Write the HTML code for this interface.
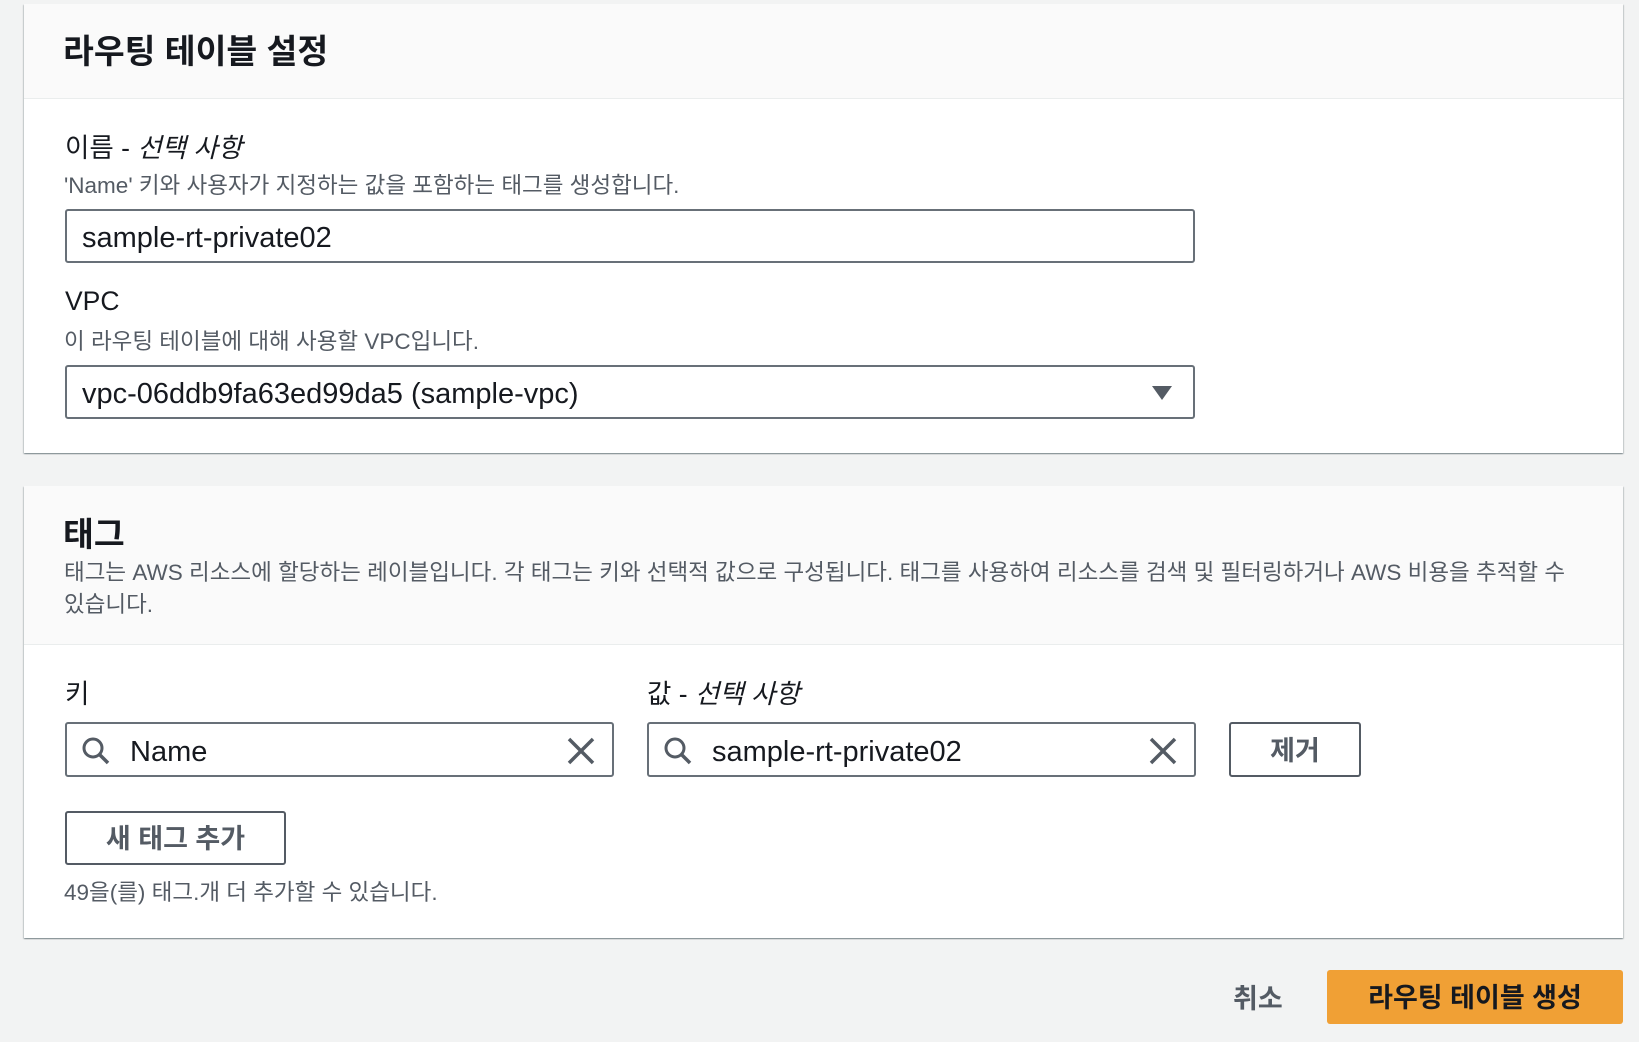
<!DOCTYPE html>
<html><head><meta charset="utf-8"><style>
*{box-sizing:border-box;margin:0;padding:0}
body{width:1639px;height:1042px;background:#f2f3f3;font-family:"Liberation Sans","Noto Sans CJK KR",sans-serif;color:#16191f;position:relative;overflow:hidden}
.a{position:absolute;white-space:nowrap}
.panel{position:absolute;left:24px;width:1599px;background:#fff;box-shadow:0 1px 1px 0 rgba(0,28,36,.3),1px 1px 1px 0 rgba(0,28,36,.15),-1px 1px 1px 0 rgba(0,28,36,.15)}
.hd{position:absolute;left:0;top:0;width:100%;background:#fafafa;border-bottom:1px solid #eaeded}
.t{font-size:33.5px;font-weight:bold}
.lbl{font-size:26.5px}
.desc{font-size:22.5px;color:#545b64}
.inp{position:absolute;border:2px solid #687078;border-radius:3px;background:#fff;font-size:29px}
.btn{position:absolute;border:2px solid #545b64;border-radius:3px;background:#fff;font-size:27px;font-weight:bold;color:#545b64;display:flex;align-items:center;justify-content:center}
</style></head><body>
<div class="panel" style="top:4px;height:449px">
 <div class="hd" style="height:95px"></div>
 <div class="a t" style="left:39px;top:20px">라우팅 테이블 설정</div>
 <div class="a lbl" style="left:41px;top:122px">이름 - <i>선택 사항</i></div>
 <div class="a desc" style="left:40px;top:164px">'Name' 키와 사용자가 지정하는 값을 포함하는 태그를 생성합니다.</div>
 <div class="inp" style="left:41px;top:205px;width:1130px;height:54px"><span class="a" style="left:15px;top:11px">sample-rt-private02</span></div>
 <div class="a lbl" style="left:41px;top:282px">VPC</div>
 <div class="a desc" style="left:40px;top:320px">이 라우팅 테이블에 대해 사용할 VPC입니다.</div>
 <div class="inp" style="left:41px;top:361px;width:1130px;height:54px"><span class="a" style="left:15px;top:11px">vpc-06ddb9fa63ed99da5 (sample-vpc)</span>
  <svg class="a" style="left:1084px;top:18px" width="22" height="16"><path d="M1 1h20L11 15z" fill="#545b64"/></svg></div>
</div>
<div class="panel" style="top:486px;height:452px">
 <div class="hd" style="height:159px"></div>
 <div class="a t" style="left:39px;top:21px">태그</div>
 <div class="a desc" style="left:40px;top:71px;line-height:32px">태그는 AWS 리소스에 할당하는 레이블입니다. 각 태그는 키와 선택적 값으로 구성됩니다. 태그를 사용하여 리소스를 검색 및 필터링하거나 AWS 비용을 추적할 수<br>있습니다.</div>
 <div class="a lbl" style="left:41px;top:186px">키</div>
 <div class="a lbl" style="left:623px;top:186px">값 - <i>선택 사항</i></div>
 <div class="inp" style="left:41px;top:236px;width:549px;height:55px">
  <svg class="a" style="left:14px;top:12px" width="30" height="30"><circle cx="12" cy="12" r="9" fill="none" stroke="#545b64" stroke-width="3"/><path d="M19 19l8 8" stroke="#545b64" stroke-width="3.5"/></svg>
  <span class="a" style="left:63px;top:12px">Name</span>
  <svg class="a" style="left:500px;top:13px" width="28" height="28"><path d="M2 2l24 24M26 2L2 26" stroke="#545b64" stroke-width="3.5"/></svg></div>
 <div class="inp" style="left:623px;top:236px;width:549px;height:55px">
  <svg class="a" style="left:14px;top:12px" width="30" height="30"><circle cx="12" cy="12" r="9" fill="none" stroke="#545b64" stroke-width="3"/><path d="M19 19l8 8" stroke="#545b64" stroke-width="3.5"/></svg>
  <span class="a" style="left:63px;top:12px">sample-rt-private02</span>
  <svg class="a" style="left:500px;top:13px" width="28" height="28"><path d="M2 2l24 24M26 2L2 26" stroke="#545b64" stroke-width="3.5"/></svg></div>
 <div class="btn" style="left:1205px;top:236px;width:132px;height:55px;padding-bottom:2px">제거</div>
 <div class="btn" style="left:41px;top:325px;width:221px;height:54px;padding-bottom:3px">새 태그 추가</div>
 <div class="a desc" style="left:40px;top:389px">49을(를) 태그.개 더 추가할 수 있습니다.</div>
</div>
<div class="a" style="left:1233px;top:977px;font-size:27px;font-weight:bold;color:#545b64">취소</div>
<div class="a" style="left:1327px;top:970px;width:296px;height:54px;padding-bottom:3px;background:#f0a035;border-radius:3px;font-size:27px;font-weight:bold;display:flex;align-items:center;justify-content:center">라우팅 테이블 생성</div>
</body></html>
